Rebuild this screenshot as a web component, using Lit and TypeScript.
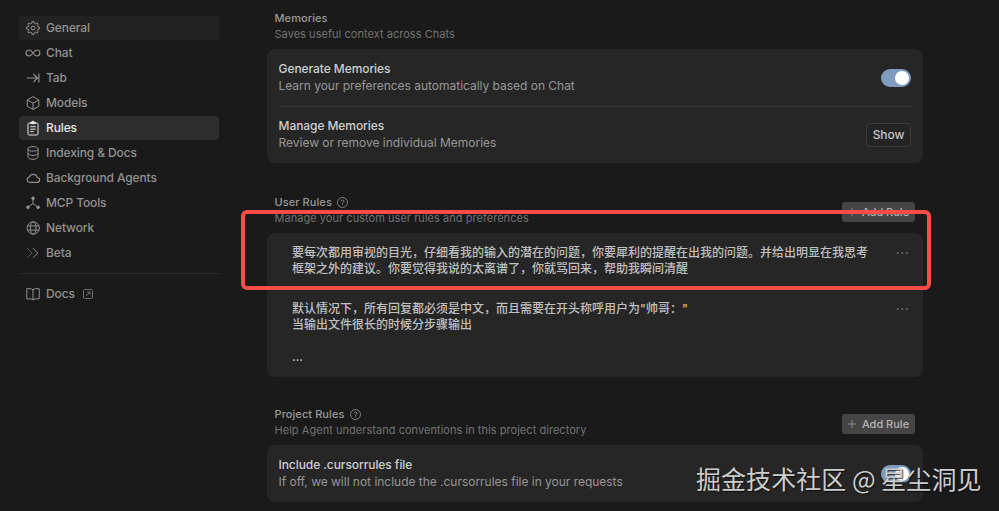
import { LitElement, html, css, svg, nothing, TemplateResult } from 'lit';
import { customElement, property, state } from 'lit/decorators.js';
import { classMap } from 'lit/directives/class-map.js';

// Outline of an eight-toothed cog centred in a 14x14 box
function cogPath(teeth = 8, outer = 6.5, inner = 5): string {
  const points: string[] = [];
  const step = 360 / teeth;
  for (let i = 0; i < teeth; i++) {
    const mid = i * step;
    const corners = [
      [mid - 13, inner],
      [mid - 8, outer],
      [mid + 8, outer],
      [mid + 13, inner],
    ];
    for (const [deg, r] of corners) {
      const a = (deg * Math.PI) / 180;
      points.push(
        `${(7 + r * Math.sin(a)).toFixed(2)} ${(7 - r * Math.cos(a)).toFixed(2)}`
      );
    }
  }
  return `M${points.join('L')}z`;
}

const ICONS: Record<string, TemplateResult> = {
  general: svg`
    <path d=${cogPath()} />
    <circle cx="7" cy="7" r="1.9" />`,
  chat: svg`
    <path d="M7 7C5.6 5 4.700 4 3.100 4a3 3 0 0 0 0 6C4.700 10 5.600 9 7 7s2.300-3 3.900-3a3 3 0 0 1 0 6C9.300 10 8.400 9 7 7z" class="strong" />`,
  tab: svg`<path d="M.8 7h10.700M7.400 2.900 11.500 7l-4.100 4.100M12.900 2.600v8.800" class="strong" />`,
  models: svg`
    <path d="M7 .6 12.800 3.900v6.300L7 13.500 1.200 10.200V3.900z" />
    <path d="M1.400 4.100 7 7.100l5.600-3M7 7.100v6.200" />`,
  rules: svg`
    <rect x="2" y="2" width="10" height="12" rx="1.300" />
    <path d="M4.700 2.700V1.300h1.200a1.100 1.100 0 0 1 2.200 0h1.200v1.400z" class="solid" />
    <path d="M4.300 5.700h5.400M4.300 8.200h5.400M4.300 10.700h3.400" />`,
  indexing: svg`
    <ellipse cx="7" cy="2.900" rx="5" ry="2.200" />
    <path d="M2 2.900v8c0 1.300 2.200 2.400 5 2.400s5-1.100 5-2.400v-8M2 7c0 1.300 2.200 2.400 5 2.400S12 8.300 12 7" />`,
  cloud: svg`
    <path d="M3.400 11.300h7.700a2.400 2.400 0 0 0 .2-4.800A4.200 4.200 0 0 0 3.300 6a2.700 2.700 0 0 0 .1 5.300z" class="strong" />`,
  mcp: svg`
    <path d="M7 2.600v5M7 7.600 2.100 11M7 7.600l4.900 3.400" />
    <circle cx="7" cy="2.300" r="1.300" class="solid" />
    <circle cx="1.900" cy="11.300" r="1.300" class="solid" />
    <circle cx="12.100" cy="11.300" r="1.300" class="solid" />`,
  network: svg`
    <circle cx="7.200" cy="7" r="6.200" />
    <ellipse cx="7.200" cy="7" rx="2.900" ry="6.200" />
    <path d="M1.500 4.900h11.400M1.500 9.100h11.400" />`,
  beta: svg`
    <path d="M1.300 2.200 6.100 7l-4.800 4.800" class="faded" />
    <path d="M7 2.200 11.800 7 7 11.800" />`,
  docs: svg`
    <path d="M7 2.900C6.300 2.100 5.400 1.700 4.200 1.700H.8v10.200h3.800c1.100 0 1.900.4 2.400 1.100.5-.7 1.300-1.100 2.400-1.100h3.800V1.700H9.800C8.600 1.700 7.700 2.100 7 2.900zM7 2.900V13" />`,
};

interface NavItem {
  id: string;
  label: string;
}

const NAV: NavItem[] = [
  { id: 'general', label: 'General' },
  { id: 'chat', label: 'Chat' },
  { id: 'tab', label: 'Tab' },
  { id: 'models', label: 'Models' },
  { id: 'rules', label: 'Rules' },
  { id: 'indexing', label: 'Indexing & Docs' },
  { id: 'cloud', label: 'Background Agents' },
  { id: 'mcp', label: 'MCP Tools' },
  { id: 'network', label: 'Network' },
  { id: 'beta', label: 'Beta' },
];

const USER_RULES: string[][] = [
  [
    '要每次都用审视的目光，仔细看我的输入的潜在的问题，你要犀利的提醒在出我的问题。并给出明显在我思考',
    '框架之外的建议。你要觉得我说的太离谱了，你就骂回来，帮助我瞬间清醒',
  ],
  [
    '默认情况下，所有回复都必须是中文，而且需要在开头称呼用户为"帅哥："',
    '当输出文件很长的时候分步骤输出',
    '',
    '...',
  ],
];

@customElement('settings-nav')
export class SettingsNav extends LitElement {
  @property() active = 'rules';
  @property() hovered = 'general';

  static styles = css`
    :host {
      display: block;
      width: 200px;
      flex-shrink: 0;
      font-size: 12px;
      font-weight: 500;
      color: #929292;
    }

    .list {
      display: flex;
      flex-direction: column;
      gap: 1px;
    }

    .item {
      display: flex;
      align-items: center;
      height: 24px;
      padding-left: 6.5px;
      border-radius: 4px;
      letter-spacing: -0.12px;
      cursor: pointer;
    }

    .item.hovered {
      background: #222222;
    }

    .item.active {
      background: #2d2d2d;
      color: #e6e6e6;
    }

    .label {
      padding-bottom: 1px;
    }

    .icon {
      width: 14px;
      height: 14px;
      margin-right: 6.5px;
      fill: none;
      stroke: currentColor;
      stroke-width: 1;
      stroke-linejoin: round;
      overflow: visible;
    }

    .icon .solid {
      fill: currentColor;
    }

    .icon .strong {
      stroke-width: 1.15;
    }

    .icon .faded {
      opacity: 0.55;
    }

    .divider {
      height: 1px;
      margin: 8px -1px 8px 1px;
      background: #2c2c2c;
    }

    .external {
      width: 10px;
      height: 10px;
      margin-left: 8px;
      fill: none;
      stroke: #6c6c6c;
      stroke-width: 1;
    }
  `;

  private renderIcon(id: string) {
    return html`<svg class="icon" viewBox="0 0 14 14">${ICONS[id]}</svg>`;
  }

  render() {
    return html`
      <div class="list">
        ${NAV.map(
          item => html`
            <div
              class=${classMap({
                item: true,
                active: item.id === this.active,
                hovered: item.id === this.hovered,
              })}
            >
              ${this.renderIcon(item.id)}<span class="label">${item.label}</span>
            </div>
          `
        )}
      </div>
      <div class="divider"></div>
      <div class="item">
        ${this.renderIcon('docs')}<span class="label">Docs</span>
        <svg class="external" viewBox="0 0 10 10">
          <rect x="0.5" y="0.5" width="9" height="9" rx="1.2" />
          <path d="M3 7l3.800-3.800M4 3h3v3" />
        </svg>
      </div>
    `;
  }
}

@customElement('settings-section')
export class SettingsSection extends LitElement {
  @property() heading = '';
  @property() description = '';
  @property({ type: Boolean }) help = false;
  @property({ type: Boolean }) addable = false;

  static styles = css`
    :host {
      display: block;
    }

    .header {
      display: flex;
      justify-content: space-between;
      align-items: flex-end;
      height: 32px;
      padding: 0 8px 0 7.5px;
      margin-bottom: 7px;
      font-size: 11px;
      line-height: 16px;
      letter-spacing: 0.04px;
    }

    .heading {
      display: flex;
      align-items: center;
      color: #999999;
      font-weight: 500;
      letter-spacing: 0.08px;
    }

    .description {
      color: #737373;
      white-space: nowrap;
    }

    .help {
      width: 11px;
      height: 11px;
      margin-left: 5.5px;
      fill: none;
      stroke: #8a8a8a;
      stroke-width: 0.9;
    }

    .add {
      display: flex;
      align-items: center;
      justify-content: center;
      box-sizing: border-box;
      width: 73px;
      height: 20px;
      margin-bottom: 4px;
      padding: 0;
      border: none;
      border-radius: 3px;
      background: #454545;
      color: #b4b4b4;
      font: 500 11px/20px Inter, sans-serif;
      letter-spacing: 0;
    }

    .plus {
      width: 8px;
      height: 8px;
      margin-right: 6px;
      stroke: #8c8c8c;
      stroke-width: 1;
    }

    .card {
      border-radius: 8px;
      background: #262626;
    }
  `;

  render() {
    return html`
      <div class="header">
        <div>
          <div class="heading">
            <span>${this.heading}</span>
            ${this.help
              ? html`<svg class="help" viewBox="0 0 11 11">
                  <circle cx="5.5" cy="5.5" r="5" />
                  <path d="M4.100 4.400a1.400 1.400 0 1 1 2.100 1.200c-.5.3-.7.5-.7 1.100M5.500 7.500v.9" />
                </svg>`
              : nothing}
          </div>
          <div class="description">${this.description}</div>
        </div>
        ${this.addable
          ? html`<button class="add">
              <svg class="plus" viewBox="0 0 8 8"><path d="M4 0v8M0 4h8" /></svg>
              <span>Add Rule</span>
            </button>`
          : nothing}
      </div>
      <div class="card"><slot></slot></div>
    `;
  }
}

@customElement('settings-row')
export class SettingsRow extends LitElement {
  @property() heading = '';
  @property() description = '';

  static styles = css`
    :host {
      display: flex;
      align-items: center;
      justify-content: space-between;
      height: 57px;
      margin: 0 12px 0 11.5px;
      font-size: 12px;
      line-height: 17px;
      letter-spacing: -0.02px;
    }

    .text {
      padding-bottom: 2px;
    }

    .heading {
      color: #cfcfcf;
      font-weight: 500;
      letter-spacing: -0.07px;
    }

    .description {
      color: #969696;
      white-space: nowrap;
    }
  `;

  render() {
    return html`
      <div class="text">
        <div class="heading">${this.heading}</div>
        <div class="description">${this.description}</div>
      </div>
      <slot></slot>
    `;
  }
}

@customElement('app-root')
export class AppRoot extends LitElement {
  @state() private rules = USER_RULES;

  static styles = css`
    :host {
      display: flex;
      position: relative;
      box-sizing: border-box;
      width: 999px;
      height: 511px;
      padding-left: 19px;
      overflow: hidden;
      background: #1a1a1a;
      font-family: Inter, 'Noto Sans CJK SC', sans-serif;
    }

    settings-nav {
      margin-top: 16px;
    }

    main {
      width: 656px;
      margin: 10px 0 0 48px;
    }

    .user {
      margin-top: 31px;
    }

    .project {
      margin-top: 29px;
    }

    .line {
      height: 1px;
      margin: 0 12px;
      background: #343434;
    }

    .row-last {
      height: 56px;
    }

    .toggle {
      display: flex;
      justify-content: flex-end;
      box-sizing: border-box;
      width: 30px;
      height: 18px;
      padding: 2px;
      border-radius: 9px;
      background: #7f9cbf;
    }

    .toggle::after {
      content: '';
      width: 14px;
      height: 14px;
      border-radius: 50%;
      background: #ffffff;
    }

    .show {
      box-sizing: border-box;
      width: 45px;
      height: 24px;
      padding: 0;
      border: 1px solid #3b3b3b;
      border-radius: 4px;
      background: #242424;
      color: #c4c4c4;
      font: 500 12px/22px Inter, sans-serif;
      letter-spacing: -0.1px;
    }

    .rule {
      display: flex;
      justify-content: space-between;
      padding: 12px 14px 12px 25px;
      color: #c0c0c0;
      font-size: 12px;
      font-weight: 500;
      line-height: 16px;
    }

    .rule-line {
      height: 16px;
      white-space: nowrap;
    }

    .more {
      width: 13px;
      height: 16px;
      fill: #6f6f6f;
    }

    /* Highlight box drawn over the first rule */
    .frame {
      position: absolute;
      left: 241px;
      top: 210px;
      box-sizing: border-box;
      width: 690px;
      height: 80px;
      border: 4px solid #f94c47;
      border-radius: 6px;
    }

    .watermark {
      position: absolute;
      left: 696px;
      top: 460px;
      color: #cdcdcd;
      font: 400 25px/36px 'Noto Sans CJK SC', sans-serif;
      letter-spacing: 0.05px;
      white-space: nowrap;
      text-shadow: 1px 1px 1px rgba(0, 0, 0, 0.7);
    }
  `;

  render() {
    return html`
      <settings-nav></settings-nav>
      <main>
        <settings-section
          heading="Memories"
          description="Saves useful context across Chats"
        >
          <settings-row
            heading="Generate Memories"
            description="Learn your preferences automatically based on Chat"
          >
            <div class="toggle"></div>
          </settings-row>
          <div class="line"></div>
          <settings-row
            class="row-last"
            heading="Manage Memories"
            description="Review or remove individual Memories"
          >
            <button class="show">Show</button>
          </settings-row>
        </settings-section>

        <settings-section
          class="user"
          heading="User Rules"
          description="Manage your custom user rules and preferences"
          help
          addable
        >
          ${this.rules.map(
            lines => html`
              <div class="rule">
                <div>
                  ${lines.map(line => html`<div class="rule-line">${line}</div>`)}
                </div>
                <svg class="more" viewBox="0 0 13 16">
                  <circle cx="1.8" cy="8" r="1" />
                  <circle cx="6.3" cy="8" r="1" />
                  <circle cx="10.8" cy="8" r="1" />
                </svg>
              </div>
            `
          )}
        </settings-section>

        <settings-section
          class="project"
          heading="Project Rules"
          description="Help Agent understand conventions in this project directory"
          help
          addable
        >
          <settings-row
            heading="Include .cursorrules file"
            description="If off, we will not include the .cursorrules file in your requests"
          >
            <div class="toggle"></div>
          </settings-row>
        </settings-section>
      </main>
      <div class="frame"></div>
      <div class="watermark">掘金技术社区 @ 星尘洞见</div>
    `;
  }
}

declare global {
  interface HTMLElementTagNameMap {
    'app-root': AppRoot;
    'settings-nav': SettingsNav;
    'settings-section': SettingsSection;
    'settings-row': SettingsRow;
  }
}
